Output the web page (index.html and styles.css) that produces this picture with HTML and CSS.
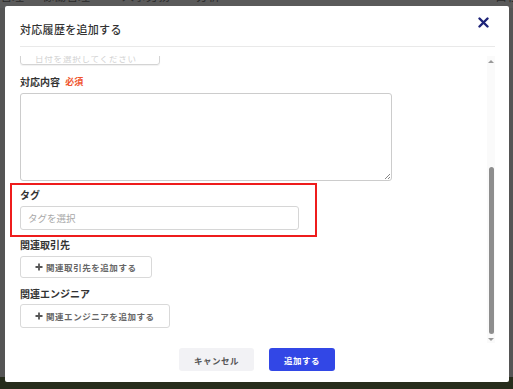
FILE: index.html
```html
<!DOCTYPE html>
<html lang="ja">
<head>
<meta charset="utf-8">
<link rel="stylesheet" href="styles.css">
</head>
<body>
<div class="page">
  <div class="topnav">
    <span class="nav n1">件管理</span>
    <span class="nav n2">稼働管理</span>
    <span class="nav n3">人事労務</span>
    <span class="nav n4">分析</span>
    <span class="nav n5">自社</span>
  </div>
  <div class="pagebody"></div>
  <div class="pagefoot"></div>
</div>

<div class="modal">
  <div class="modal-header">
    <h2 class="modal-title">対応履歴を追加する</h2>
    <button class="close-btn" aria-label="閉じる">
      <svg width="11" height="11" viewBox="0 0 11 11"><path d="M1.5 1.5 L9.5 9.5 M9.5 1.5 L1.5 9.5" stroke="#1d2378" stroke-width="2.4" stroke-linecap="round"/></svg>
    </button>
  </div>
  <div class="divider"></div>
  <div class="modal-main">
    <div class="viewport">
      <div class="content">
        <div class="field-top"><span class="faint">日付を選択してください</span></div>
        <div class="label first-label">対応内容 <span class="req">必須</span></div>
        <div class="textarea"><span class="grip"></span></div>
        <div class="highlight">
          <div class="label tag-label">タグ</div>
          <div class="select">タグを選択</div>
        </div>
        <div class="label l3">関連取引先</div>
        <button class="add-btn b1"><svg width="8" height="8" viewBox="0 0 8 8"><path d="M4 0.5 V7.5 M0.5 4 H7.5" stroke="#555" stroke-width="1.8"/></svg>関連取引先を追加する</button>
        <div class="label l4">関連エンジニア</div>
        <button class="add-btn b2"><svg width="8" height="8" viewBox="0 0 8 8"><path d="M4 0.5 V7.5 M0.5 4 H7.5" stroke="#555" stroke-width="1.8"/></svg>関連エンジニアを追加する</button>
        <div class="spacer"></div>
      </div>
    </div>
    <div class="scrollbar">
      <span class="arrow up"></span>
      <div class="track"><div class="thumb"></div></div>
      <span class="arrow down"></span>
    </div>
  </div>
  <div class="modal-footer">
    <button class="btn cancel">キャンセル</button>
    <button class="btn primary">追加する</button>
  </div>
</div>
</body>
</html>
```
FILE: styles.css
```css
* { box-sizing: border-box; }
html, body { margin: 0; padding: 0; }
body {
  width: 513px;
  height: 389px;
  overflow: hidden;
  background: #585858;
  font-family: "Noto Sans CJK JP", "Noto Sans", sans-serif;
  position: relative;
}
.page {
  display: flex;
  flex-direction: column;
  height: 389px;
}
.topnav {
  height: 20px;
  display: flex;
  align-items: flex-start;
  margin-top: -12px;
  font-size: 12px;
  color: #2a2a2a;
  background: #5a5a5a;
}
.nav { line-height: 16px; white-space: nowrap; }
.n1 { margin-left: -12px; }
.n2 { margin-left: 18px; }
.n3 { margin-left: 32px; }
.n4 { margin-left: 26px; }
.n5 { margin-left: auto; margin-right: -6px; }
.pagebody { flex: 1; background: #555; }
.pagefoot { height: 12px; background: #262c1b; }

.modal {
  position: absolute;
  left: 5px;
  top: 6px;
  width: 504px;
  height: 376px;
  background: #fff;
  border-radius: 2px;
  display: flex;
  flex-direction: column;
}
.modal-header {
  height: 40px;
  display: flex;
  align-items: center;
  justify-content: space-between;
  padding: 5px 20px 0 15px;
}
.modal-title {
  margin: 0;
  font-size: 11px;
  font-weight: 500;
  color: #333;
  letter-spacing: 0.3px;
}
.close-btn {
  border: 0;
  background: none;
  padding: 0;
  width: 11px;
  height: 11px;
  display: flex;
  margin-top: -12px;
}
.divider {
  height: 1px;
  background: #e9e9e9;
  margin: 0 14px 0 15px;
}
.modal-main {
  margin-top: 9px;
  height: 287px;
  display: flex;
}
.viewport {
  flex: 1;
  overflow: hidden;
  padding-left: 15px;
}
.content {
  margin-top: -15px;
  display: flex;
  flex-direction: column;
  align-items: flex-start;
}
.field-top {
  width: 140px;
  height: 24px;
  border: 1px solid #d4d4d4;
  border-radius: 3px;
  box-shadow: 0 1px 1px rgba(0,0,0,0.06);
  padding: 0 0 0 14px;
  font-size: 8.5px;
  line-height: 33px;
  letter-spacing: 0.8px;
  overflow: hidden;
}
.faint { color: #d2d2d2; white-space: nowrap; }
.label {
  font-size: 10px;
  font-weight: 700;
  color: #333;
  line-height: 14px;
  height: 14px;
}
.first-label { margin-top: 10px; }
.req {
  color: #f0552e;
  font-size: 9px;
  line-height: 14px;
  vertical-align: top;
  margin-left: 3px;
}
.textarea {
  margin-top: 4px;
  width: 372px;
  height: 88px;
  border: 1px solid #cccccc;
  border-radius: 3px;
  position: relative;
}
.grip {
  position: absolute;
  right: 1px;
  bottom: 1px;
  width: 5px;
  height: 5px;
  background: linear-gradient(135deg, transparent 45%, #888 45%, #888 55%, transparent 55%, transparent 75%, #888 75%, #888 85%, transparent 85%);
}
.highlight {
  margin-top: 2px;
  margin-left: -10px;
  width: 307px;
  border: 2px solid #ee1c1c;
  padding: 3px 16px 5px 8px;
}
.select {
  margin-top: 4px;
  height: 24px;
  width: 279px;
  border: 1px solid #d6d6d6;
  border-radius: 3px;
  font-size: 9.5px;
  color: #a8a8a8;
  line-height: 22px;
  padding-left: 7px;
}
.l3 { margin-top: 1px; }
.l4 { margin-top: 9px; }
.add-btn {
  display: flex;
  align-items: center;
  gap: 3px;
  border: 1px solid #d9d9d9;
  border-radius: 3px;
  background: #fff;
  font-family: inherit;
  font-size: 8.5px;
  font-weight: 700;
  letter-spacing: 0.55px;
  color: #666;
  padding: 0 0 0 14px;
}
.add-btn svg { flex: none; }
.b1 { margin-top: 4px; height: 22px; width: 132px; }
.b2 { margin-top: 3px; height: 24px; width: 150px; }
.spacer { height: 40px; }

.scrollbar {
  width: 8px;
  margin-right: 14px;
  background: #fafafa;
  display: flex;
  flex-direction: column;
  align-items: center;
  padding: 4px 0 2px;
}
.arrow {
  width: 0;
  height: 0;
  border-left: 3px solid transparent;
  border-right: 3px solid transparent;
  flex: none;
}
.arrow.up { border-bottom: 3px solid #999; }
.arrow.down { border-top: 3px solid #999; }
.track {
  flex: 1;
  width: 100%;
  display: flex;
  flex-direction: column;
  justify-content: flex-end;
  align-items: center;
  padding: 0 0 4px;
}
.thumb {
  width: 5px;
  height: 167px;
  background: #8e8e8e;
  border-radius: 3px;
}

.modal-footer {
  display: flex;
  justify-content: center;
  gap: 15px;
  padding-top: 5px;
}
.btn {
  height: 23px;
  border: 0;
  border-radius: 3px;
  font-family: inherit;
  font-size: 8.5px;
  font-weight: 700;
  letter-spacing: 0.5px;
}
.cancel { width: 75px; background: #f2f2f5; color: #555; }
.primary { width: 66px; background: #3247e6; color: #fff; }
```
